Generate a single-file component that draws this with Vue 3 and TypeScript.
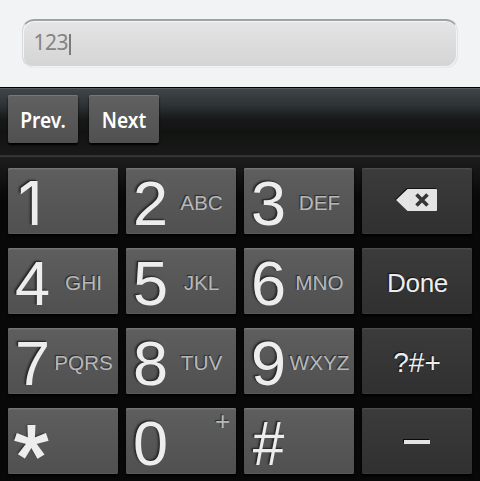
<script setup lang="ts">
interface Key {
  main: string
  sub?: string
  kind?: 'star' | 'zero' | 'delete' | 'action' | 'symbols' | 'dash' | 'hash' | 'one'
}

const keys: Key[] = [
  { main: '1', kind: 'one' },
  { main: '2', sub: 'ABC' },
  { main: '3', sub: 'DEF' },
  { main: '', kind: 'delete' },
  { main: '4', sub: 'GHI' },
  { main: '5', sub: 'JKL' },
  { main: '6', sub: 'MNO' },
  { main: 'Done', kind: 'action' },
  { main: '7', sub: 'PQRS' },
  { main: '8', sub: 'TUV' },
  { main: '9', sub: 'WXYZ' },
  { main: '?#+', kind: 'symbols' },
  { main: '*', kind: 'star' },
  { main: '0', sub: '+', kind: 'zero' },
  { main: '#', kind: 'hash' },
  { main: '', kind: 'dash' },
]

const isDark = (key: Key): boolean =>
  ['delete', 'action', 'symbols', 'dash'].includes(key.kind ?? '')
</script>

<template>
  <main class="screen">
    <header class="entry">
      <div class="field"><span class="value">123</span><i class="caret"></i></div>
    </header>
    <nav class="toolbar">
      <button class="nav-button"><span class="prev">Prev.</span></button>
      <button class="nav-button"><span class="next">Next</span></button>
    </nav>
    <section class="keypad">
      <button
        v-for="(key, i) in keys"
        :key="i"
        class="key"
        :class="[key.kind, { dark: isDark(key) }]"
      >
        <svg v-if="key.kind === 'delete'" class="icon" viewBox="0 0 44 26" width="44" height="26">
          <path class="icon-shadow" d="M0 12.5 11.5 1H40.5L42 3V11L12 23Z" />
          <path class="icon-body" d="M1 13 12.5 2H41Q42 2 42 3V23Q42 24 41 24H12.5Z" />
          <path class="icon-cross" d="M21.5 7.5 32.5 18.5M32.5 7.5 21.5 18.5" />
        </svg>
        <i v-else-if="key.kind === 'dash'" class="bar"></i>
        <template v-else>
          <span class="main">{{ key.main }}</span>
          <span v-if="key.sub" class="sub">{{ key.sub }}</span>
        </template>
      </button>
    </section>
  </main>
</template>

<style>
body {
  background: #080808;
  overflow: hidden;
}
</style>

<style scoped>
.screen {
  box-sizing: border-box;
  width: 480px;
  height: 481px;
  overflow: hidden;
  background: #080808;
  font-family: "Liberation Sans", sans-serif;
}
button {
  border: 0;
  margin: 0;
  padding: 0;
  font-family: inherit;
}
.entry {
  box-sizing: border-box;
  height: 87px;
  padding: 19px 22px;
  background: #f1f3f5;
}
.field {
  box-sizing: border-box;
  display: flex;
  height: 49px;
  padding: 11px 0 0 10px;
  border: 1px solid;
  border-color: #a0a3a3 #e2e3e3 #e9e9e9 #d9dadb;
  border-top-width: 2px;
  border-radius: 12px;
  background: linear-gradient(#e5e5e5, #d4d4d4);
  box-shadow: inset 1px 1px 0 #f5f5f5, inset -1px -1px 0 #f3f3f3;
}
.value {
  width: 35px;
  color: #848484;
  font: 21px/20px "Noto Sans", sans-serif;
  letter-spacing: -0.5px;
  text-indent: 0.5px;
}
.caret {
  width: 2px;
  height: 21px;
  margin: 2px 0 0 1px;
  background: #7b7b7b;
}
.toolbar {
  box-sizing: border-box;
  display: flex;
  gap: 11px;
  height: 70px;
  padding: 7px 8px 0;
  border-top: 1px solid #000;
  border-bottom: 1px solid #393939;
  background: linear-gradient(#40464a, #2c3134 27%, #171818 46%, #121412 65%, #191919);
  box-shadow: inset 0 1px 0 #595c5d, inset 0 -1px 0 #303030;
}
.nav-button {
  width: 70px;
  height: 48px;
  border-radius: 2px;
  color: #fff;
  background: linear-gradient(#616161, #505050);
  box-shadow: inset 0 1px 0 #777, 0 2px 2px #000;
  font: 600 22px/49px "Noto Sans", sans-serif;
}
.nav-button span {
  display: block;
  white-space: nowrap;
  text-align: center;
  transform: scaleX(0.87);
}
.keypad {
  display: grid;
  grid-template-columns: repeat(4, 110px);
  grid-auto-rows: 66px;
  gap: 14px 8px;
  box-sizing: border-box;
  height: 324px;
  padding: 11px 8px;
  background: linear-gradient(#1d1d1d, #080808 40px);
}
.key {
  display: flex;
  padding-left: 7px;
  border-radius: 2px;
  color: #ededed;
  background: linear-gradient(#5e5e5e, #505050);
  box-shadow: inset 0 1px 0 #767676, inset 0 2px 0 #666, inset 0 -1px 0 #595959, 0 2px 2px #000;
  text-align: left;
}
.main {
  width: 35px;
  flex: none;
  font-size: 63px;
  line-height: 71px;
  text-shadow: -1px -1px 1px #292929, -2px -1px 2px #303030;
}
.sub {
  width: 67px;
  flex: none;
  color: #b8b8b8;
  font-size: 20.7px;
  line-height: 70px;
  text-align: center;
  white-space: nowrap;
  text-shadow: -1px -1px 1px #292929;
}
.dark {
  align-items: center;
  justify-content: center;
  padding: 0;
  background: linear-gradient(#3b3b3b, #303030);
  box-shadow: inset 0 1px 0 #4c4c4c, inset 0 2px 0 #404040, inset 0 -1px 0 #373737, 0 2px 2px #000;
}
.dark .main {
  width: auto;
  padding-top: 4px;
  font-size: 26px;
  line-height: 66px;
  text-shadow: -1px -1px 1px #111;
}
.action .main {
  padding-left: 1px;
  letter-spacing: -0.3px;
}
.symbols .main {
  font-size: 28px;
}
.icon {
  display: block;
  margin-top: -2px;
}
.icon-shadow {
  fill: #111;
}
.icon-body {
  fill: #e4e4e4;
}
.icon-cross {
  fill: none;
  stroke: #363636;
  stroke-width: 3.6;
}
.bar {
  width: 26px;
  height: 4px;
  margin-top: 2px;
  background: #e4e4e4;
  box-shadow: -1px -1px 0 #090909;
}
.one .main {
  padding-left: 3px;
  font-family: Inter, sans-serif;
  font-size: 61px;
}
.hash .main {
  transform: scaleX(0.9);
}
.star {
  padding-left: 6px;
}
.star .main {
  height: 66px;
  font-size: 89px;
  line-height: 96px;
  -webkit-text-stroke: 2px #ededed;
}
.zero .sub {
  padding-left: 21px;
  font-size: 26px;
  line-height: 26px;
}
</style>
